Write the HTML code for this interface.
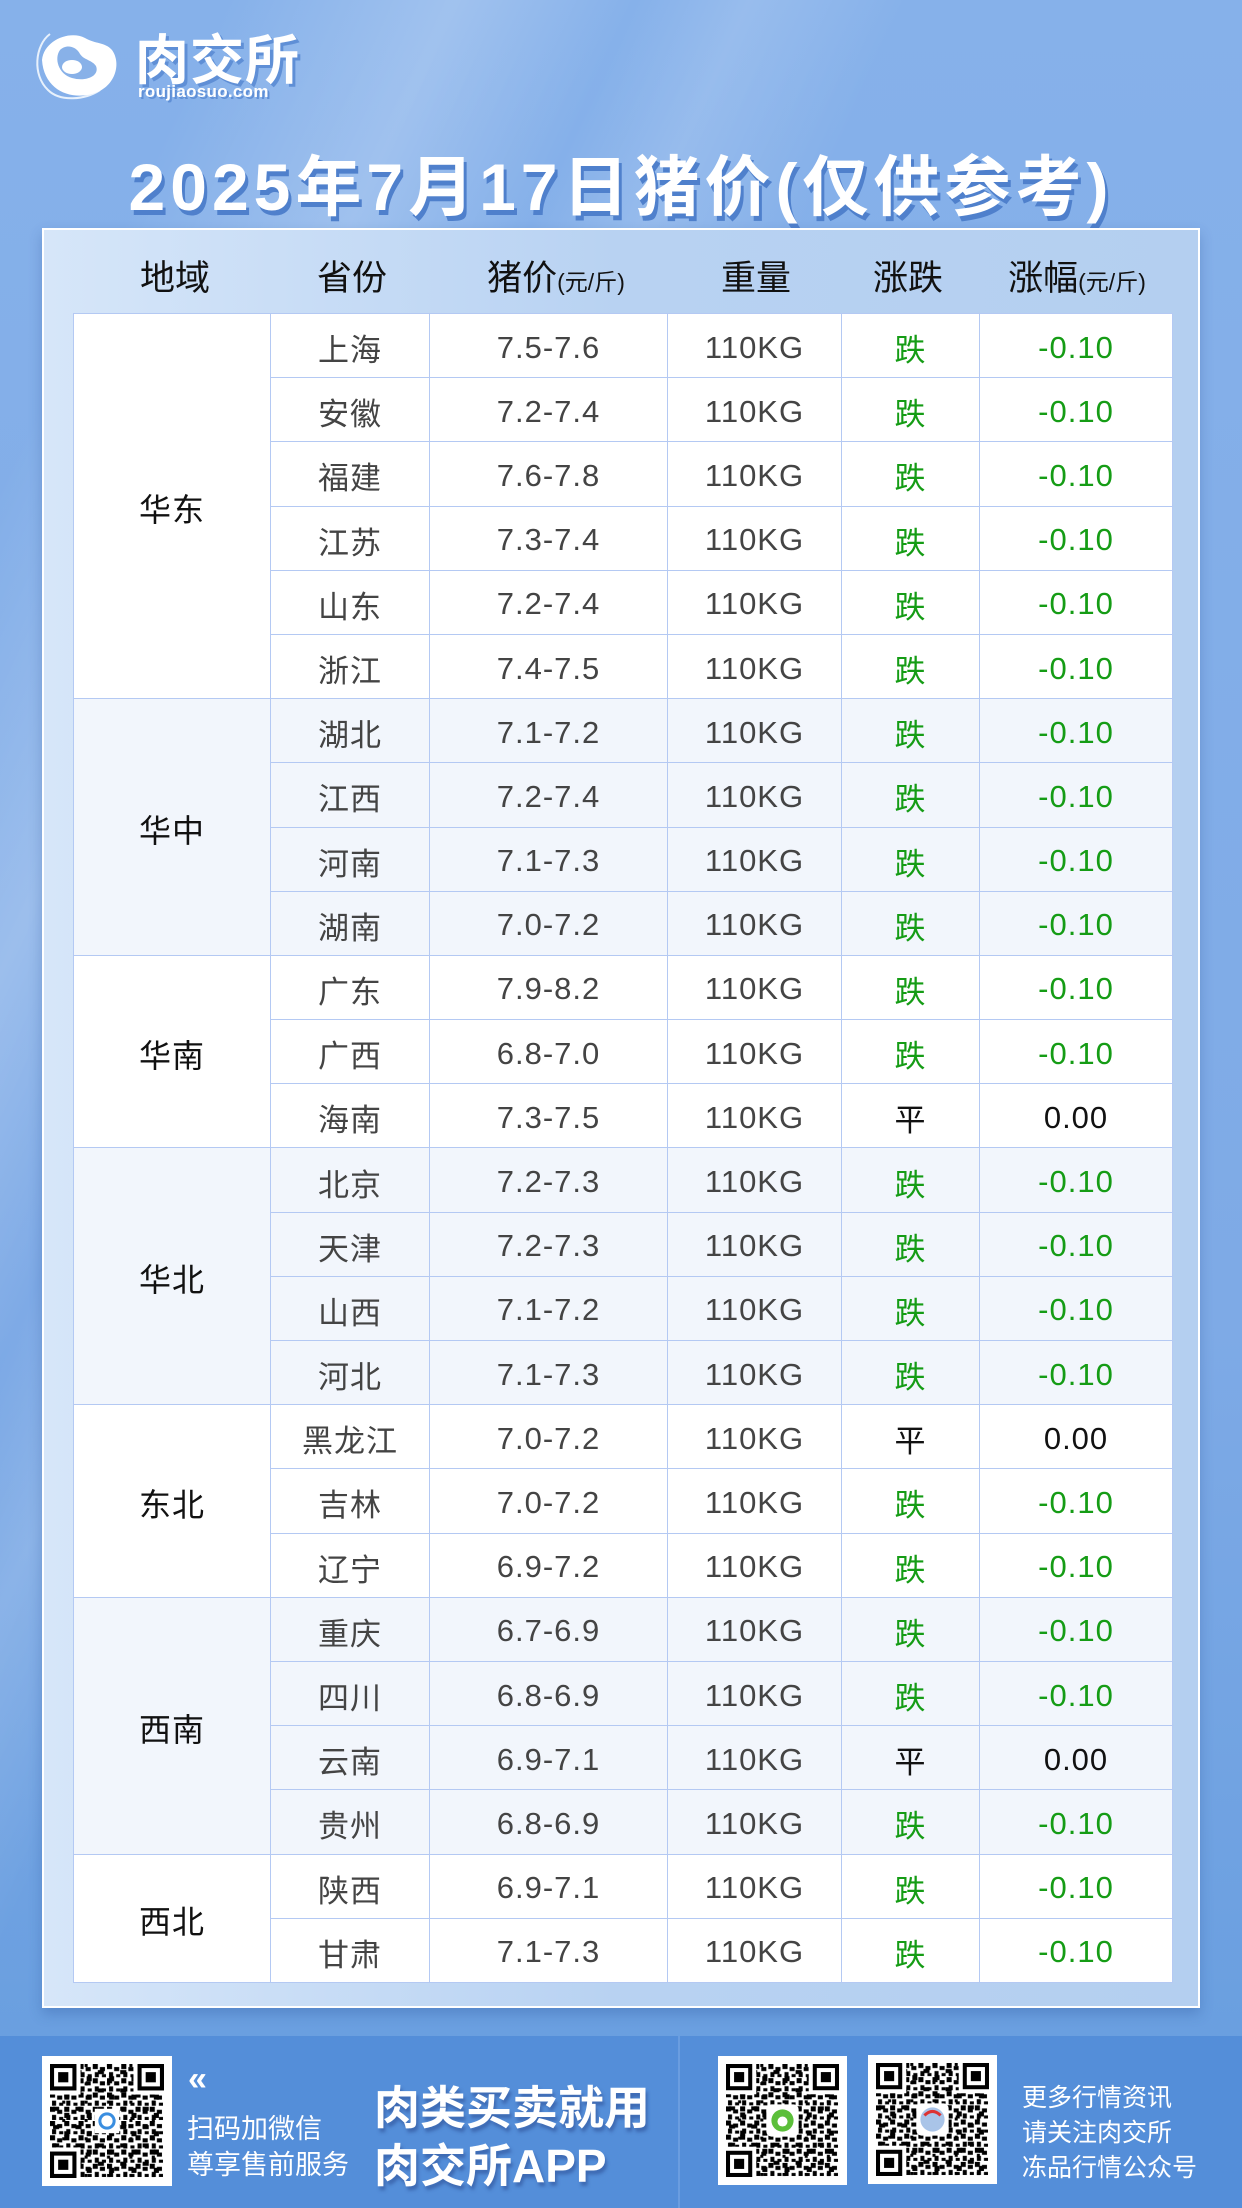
<!DOCTYPE html>
<html><head><meta charset="utf-8">
<style>
*{margin:0;padding:0;box-sizing:border-box}
body{width:1242px;height:2208px;position:relative;overflow:hidden;font-family:"Liberation Sans","Noto Sans CJK SC",sans-serif;
background:linear-gradient(115deg,rgba(255,255,255,0) 10%,rgba(255,255,255,.22) 20%,rgba(255,255,255,0) 28%,rgba(255,255,255,.15) 33%,rgba(255,255,255,0) 40%),linear-gradient(180deg,#86b1ea 0%,#7eaae6 60%,#6a9fe0 92%,#5f96dc 100%);}
.logo-t{position:absolute;left:135px;top:16px;font-size:54px;font-weight:bold;color:#fff;letter-spacing:1px;text-shadow:3px 3px 0 #5f8fd6;}
.logo-u{position:absolute;left:138px;top:82px;font-size:17px;font-weight:bold;color:#fff;text-shadow:2px 2px 0 #5f8fd6;letter-spacing:.3px}
.title{position:absolute;left:0;width:1242px;top:134px;text-align:center;font-size:66px;font-weight:bold;color:#fff;letter-spacing:5px;text-shadow:3px 5px 0 #4f80cc;}
.panel{position:absolute;left:42px;top:228px;width:1158px;height:1780px;border:2px solid #fff;
background:linear-gradient(90deg,#d6e6f9 0%,#b8d2f2 50%,#b4cff0 100%);box-shadow:0 6px 12px rgba(40,80,150,.3)}
.hd{position:absolute;top:250px;font-size:35px;color:#111;transform:translateX(-50%);white-space:nowrap}
.hd small{font-size:23px}
table{position:absolute;left:73px;top:313px;width:1099px;border-collapse:collapse;table-layout:fixed}
td{border:1.5px solid #b4c9f3;height:64.2px;text-align:center;font-size:31px;color:#444;padding:4px 0 0 0;letter-spacing:1px}
td.r{color:#111;font-size:32px}
td.g{color:#159c15}
.w td{background:#fff}.l td{background:#f2f6fc}
.foot{position:absolute;left:0;top:2036px;width:1242px;height:172px;background:#548ed9}
.div{position:absolute;left:678px;top:2036px;width:2px;height:172px;background:#6a9de0}
.qr{position:absolute;background:#fff;padding:8px}
.ft{position:absolute;color:#fff;white-space:nowrap}
</style></head><body>
<svg style="position:absolute;left:30px;top:20px" width="95" height="85" viewBox="0 0 95 85">
<path d="M20 14 C5 25 2 55 18 70 C30 82 55 80 70 70" fill="none" stroke="#e8f1fc" stroke-width="2"/>
<path d="M12 40 C14 20 40 10 55 18 C65 24 75 22 82 30 C92 44 85 68 62 74 C40 80 14 70 12 40Z" fill="#fff"/>
<path d="M30 30 C36 24 46 26 50 34 C54 40 62 40 66 46 C70 56 56 62 42 58 C28 54 24 38 30 30Z" fill="#88b1e8"/>
<ellipse cx="42" cy="47" rx="10" ry="7" fill="#fff"/>
</svg>
<div class="logo-t">肉交所</div>
<div class="logo-u">roujiaosuo.com</div>
<div class="title">2025年7月17日猪价(仅供参考)</div>
<div class="panel"></div>
<div class="hd" style="left:175px">地域</div>
<div class="hd" style="left:352px">省份</div>
<div class="hd" style="left:556px">猪价<small>(元/斤)</small></div>
<div class="hd" style="left:756px">重量</div>
<div class="hd" style="left:908px">涨跌</div>
<div class="hd" style="left:1077px">涨幅<small>(元/斤)</small></div>
<table>
<colgroup><col style="width:197px"><col style="width:159px"><col style="width:238px"><col style="width:174px"><col style="width:138px"><col style="width:193px"></colgroup>
<tr class="w"><td class="r" rowspan="6">华东</td><td>上海</td><td>7.5-7.6</td><td>110KG</td><td class="g">跌</td><td class="g">-0.10</td></tr>
<tr class="w"><td>安徽</td><td>7.2-7.4</td><td>110KG</td><td class="g">跌</td><td class="g">-0.10</td></tr>
<tr class="w"><td>福建</td><td>7.6-7.8</td><td>110KG</td><td class="g">跌</td><td class="g">-0.10</td></tr>
<tr class="w"><td>江苏</td><td>7.3-7.4</td><td>110KG</td><td class="g">跌</td><td class="g">-0.10</td></tr>
<tr class="w"><td>山东</td><td>7.2-7.4</td><td>110KG</td><td class="g">跌</td><td class="g">-0.10</td></tr>
<tr class="w"><td>浙江</td><td>7.4-7.5</td><td>110KG</td><td class="g">跌</td><td class="g">-0.10</td></tr>
<tr class="l"><td class="r" rowspan="4">华中</td><td>湖北</td><td>7.1-7.2</td><td>110KG</td><td class="g">跌</td><td class="g">-0.10</td></tr>
<tr class="l"><td>江西</td><td>7.2-7.4</td><td>110KG</td><td class="g">跌</td><td class="g">-0.10</td></tr>
<tr class="l"><td>河南</td><td>7.1-7.3</td><td>110KG</td><td class="g">跌</td><td class="g">-0.10</td></tr>
<tr class="l"><td>湖南</td><td>7.0-7.2</td><td>110KG</td><td class="g">跌</td><td class="g">-0.10</td></tr>
<tr class="w"><td class="r" rowspan="3">华南</td><td>广东</td><td>7.9-8.2</td><td>110KG</td><td class="g">跌</td><td class="g">-0.10</td></tr>
<tr class="w"><td>广西</td><td>6.8-7.0</td><td>110KG</td><td class="g">跌</td><td class="g">-0.10</td></tr>
<tr class="w"><td>海南</td><td>7.3-7.5</td><td>110KG</td><td style="color:#111">平</td><td style="color:#111">0.00</td></tr>
<tr class="l"><td class="r" rowspan="4">华北</td><td>北京</td><td>7.2-7.3</td><td>110KG</td><td class="g">跌</td><td class="g">-0.10</td></tr>
<tr class="l"><td>天津</td><td>7.2-7.3</td><td>110KG</td><td class="g">跌</td><td class="g">-0.10</td></tr>
<tr class="l"><td>山西</td><td>7.1-7.2</td><td>110KG</td><td class="g">跌</td><td class="g">-0.10</td></tr>
<tr class="l"><td>河北</td><td>7.1-7.3</td><td>110KG</td><td class="g">跌</td><td class="g">-0.10</td></tr>
<tr class="w"><td class="r" rowspan="3">东北</td><td>黑龙江</td><td>7.0-7.2</td><td>110KG</td><td style="color:#111">平</td><td style="color:#111">0.00</td></tr>
<tr class="w"><td>吉林</td><td>7.0-7.2</td><td>110KG</td><td class="g">跌</td><td class="g">-0.10</td></tr>
<tr class="w"><td>辽宁</td><td>6.9-7.2</td><td>110KG</td><td class="g">跌</td><td class="g">-0.10</td></tr>
<tr class="l"><td class="r" rowspan="4">西南</td><td>重庆</td><td>6.7-6.9</td><td>110KG</td><td class="g">跌</td><td class="g">-0.10</td></tr>
<tr class="l"><td>四川</td><td>6.8-6.9</td><td>110KG</td><td class="g">跌</td><td class="g">-0.10</td></tr>
<tr class="l"><td>云南</td><td>6.9-7.1</td><td>110KG</td><td style="color:#111">平</td><td style="color:#111">0.00</td></tr>
<tr class="l"><td>贵州</td><td>6.8-6.9</td><td>110KG</td><td class="g">跌</td><td class="g">-0.10</td></tr>
<tr class="w"><td class="r" rowspan="2">西北</td><td>陕西</td><td>6.9-7.1</td><td>110KG</td><td class="g">跌</td><td class="g">-0.10</td></tr>
<tr class="w"><td>甘肃</td><td>7.1-7.3</td><td>110KG</td><td class="g">跌</td><td class="g">-0.10</td></tr>
</table>
<div class="foot"></div><div class="div"></div>
<svg width="0" height="0" style="position:absolute"><defs>
<pattern id="p1" width="14" height="14" patternUnits="userSpaceOnUse"><rect width="14" height="14" fill="#fff"/><rect x="0" y="0" width="5" height="5" fill="#000"/><rect x="7" y="3" width="5" height="4" fill="#000"/><rect x="2" y="8" width="4" height="5" fill="#000"/><rect x="9" y="10" width="4" height="3" fill="#000"/></pattern>
<pattern id="p2" width="22" height="18" patternUnits="userSpaceOnUse"><rect x="3" y="6" width="6" height="4" fill="#000"/><rect x="14" y="12" width="5" height="5" fill="#000"/><rect x="12" y="0" width="3" height="3" fill="#000"/></pattern>
<g id="fd"><rect width="26" height="26" fill="#000"/><rect x="4" y="4" width="18" height="18" fill="#fff"/><rect x="8" y="8" width="10" height="10" fill="#000"/></g>
<g id="qrg"><rect width="112" height="112" fill="url(#p1)"/><rect width="112" height="112" fill="url(#p2)"/>
<rect width="30" height="30" fill="#fff"/><rect x="82" width="30" height="30" fill="#fff"/><rect y="82" width="30" height="30" fill="#fff"/>
<use href="#fd"/><use href="#fd" x="86"/><use href="#fd" y="86"/></g>
</defs></svg>
<div class="qr" style="left:42px;top:2056px;width:130px;height:130px"><svg width="114" height="114" viewBox="0 0 112 112"><use href="#qrg"/><rect x="44" y="44" width="24" height="24" fill="#fff"/><circle cx="56" cy="56" r="7" fill="none" stroke="#3a8ee0" stroke-width="3"/></svg></div>
<div class="ft" style="left:188px;top:2060px;font-size:34px;font-weight:bold">«</div>
<div class="ft" style="left:187px;top:2107px;font-size:27px">扫码加微信</div>
<div class="ft" style="left:187px;top:2143px;font-size:27px">尊享售前服务</div>
<div class="ft" style="left:374px;top:2072px;font-size:46px;font-weight:bold;text-shadow:2px 4px 3px rgba(40,70,140,.5)">肉类买卖就用</div>
<div class="ft" style="left:374px;top:2130px;font-size:46px;font-weight:bold;text-shadow:2px 4px 3px rgba(40,70,140,.5)">肉交所APP</div>
<div class="qr" style="left:718px;top:2056px;width:129px;height:129px"><svg width="113" height="113" viewBox="0 0 112 112"><use href="#qrg"/><rect x="40" y="40" width="32" height="32" rx="5" fill="#fff"/><circle cx="56" cy="56" r="11" fill="#5bbf3a"/><circle cx="56" cy="57" r="5" fill="#fff"/></svg></div>
<div class="qr" style="left:868px;top:2055px;width:129px;height:129px"><svg width="113" height="113" viewBox="0 0 112 112"><use href="#qrg"/><rect x="40" y="40" width="32" height="32" rx="5" fill="#fff"/><circle cx="56" cy="56" r="12" fill="#a9c4e8"/><path d="M48 52 Q56 44 64 52" stroke="#d33" stroke-width="3" fill="none"/></svg></div>
<div class="ft" style="left:1022px;top:2078px;font-size:25px">更多行情资讯</div>
<div class="ft" style="left:1022px;top:2113px;font-size:25px">请关注肉交所</div>
<div class="ft" style="left:1022px;top:2148px;font-size:25px">冻品行情公众号</div>
</body></html>
